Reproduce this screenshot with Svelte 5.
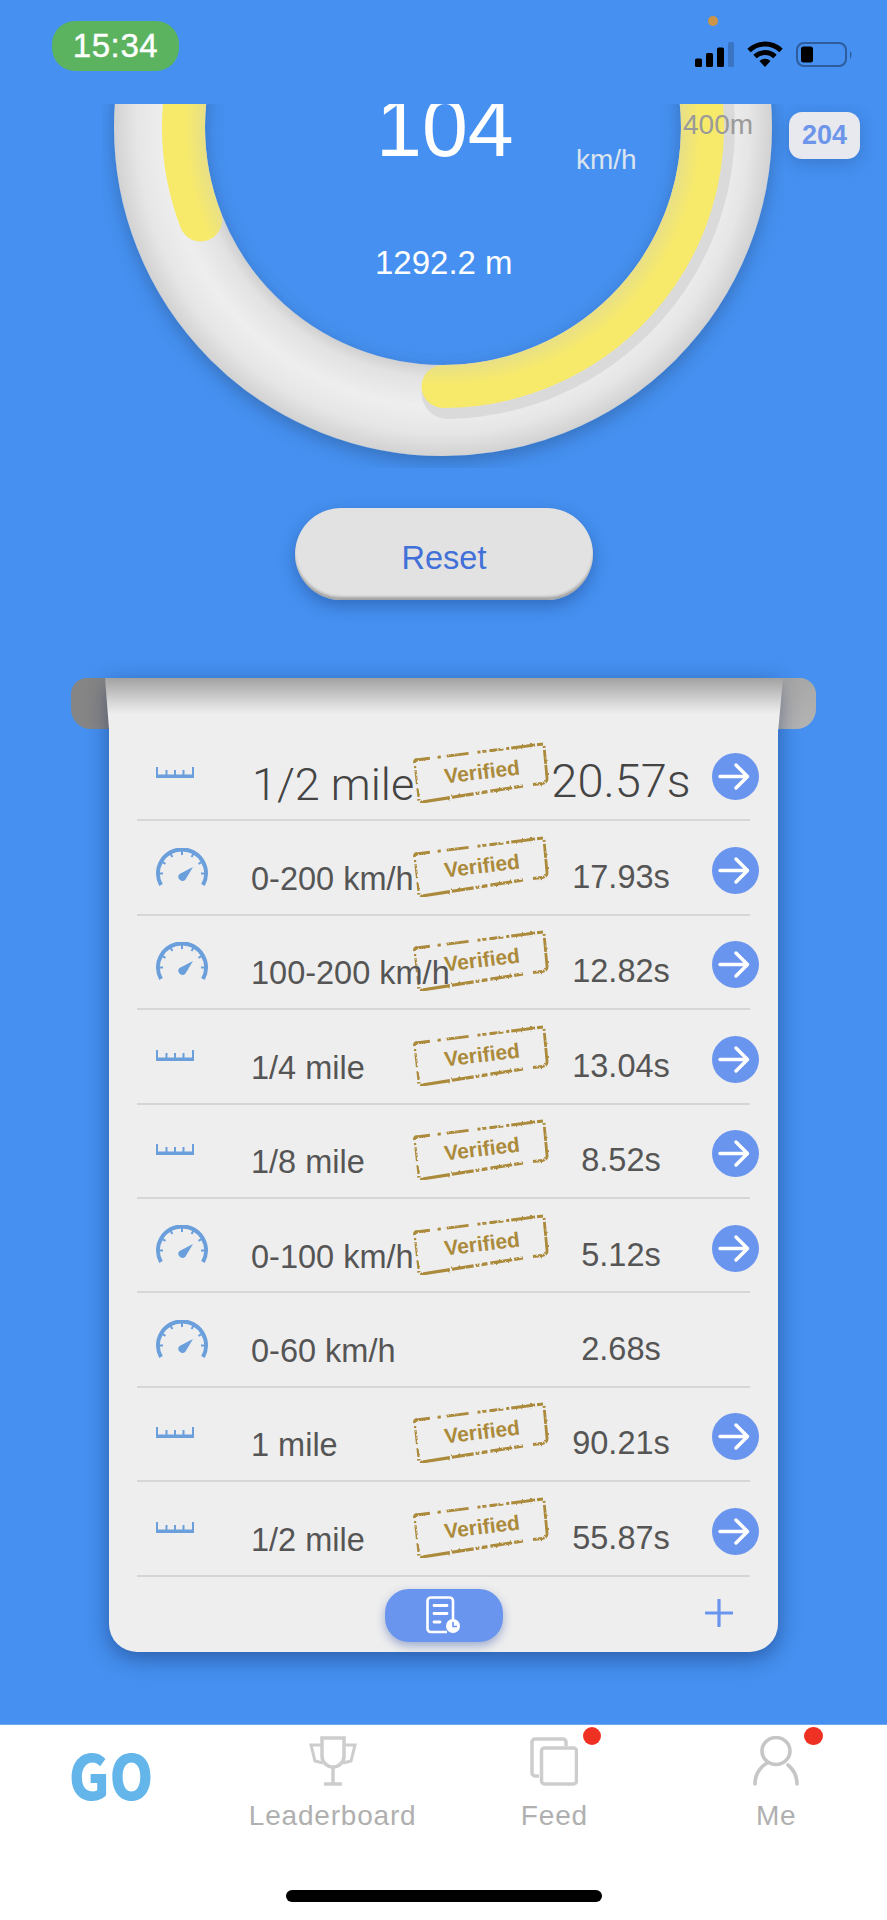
<script lang="ts">
	type Row = { kind: 'ruler' | 'speed'; label: string; time: string; verified: boolean; big?: boolean };

	const rows: Row[] = [
		{ kind: 'ruler', label: '1/2 mile', time: '20.57s', verified: true, big: true },
		{ kind: 'speed', label: '0-200 km/h', time: '17.93s', verified: true },
		{ kind: 'speed', label: '100-200 km/h', time: '12.82s', verified: true },
		{ kind: 'ruler', label: '1/4 mile', time: '13.04s', verified: true },
		{ kind: 'ruler', label: '1/8 mile', time: '8.52s', verified: true },
		{ kind: 'speed', label: '0-100 km/h', time: '5.12s', verified: true },
		{ kind: 'speed', label: '0-60 km/h', time: '2.68s', verified: false },
		{ kind: 'ruler', label: '1 mile', time: '90.21s', verified: true },
		{ kind: 'ruler', label: '1/2 mile', time: '55.87s', verified: true }
	];

	// gauge centre in stage coordinates (stage starts at y=104)
	const cx = 443;
	const cy = 23;

	function pt(r: number, deg: number) {
		const a = (deg * Math.PI) / 180;
		return `${(cx + r * Math.cos(a)).toFixed(1)} ${(cy + r * Math.sin(a)).toFixed(1)}`;
	}
	// clockwise in screen terms, angles in degrees from +x
	function arc(r: number, from: number, to: number) {
		return `M${pt(r, from)} A${r} ${r} 0 ${Math.abs(to - from) > 180 ? 1 : 0} ${to > from ? 1 : 0} ${pt(r, to)}`;
	}
</script>

{#snippet stamp()}
	<svg class="stamp" viewBox="0 0 136 61" width="136" height="61" aria-hidden="true">
		<g fill="none" stroke="#ab8a3b" stroke-width="2.800" stroke-linecap="butt" filter="url(#rough)">
			<path d="M3 18 L130 2" stroke-dasharray="14 8 3 6 22 9 3 2 4 3 8 1 5 3 3 2 24 2" />
			<path d="M1.500 21 Q1 18 4 17.500" />
			<path d="M131 4 L134 36 Q134.500 41 129 41.500 L120 42.500" stroke-dasharray="2 2 14 1 18 1 14 0" />
			<path d="M110 44 L9 60 Q6 60.500 5.800 57" stroke-dasharray="9 2 22 3 6 2 4 2 22 2 30 2" stroke-width="3.200" />
			<path d="M5.500 55 L2 24" stroke-dasharray="9 4 14 2 6 2" stroke-width="2.200" />
		</g>
		<text x="69" y="37" text-anchor="middle" transform="rotate(-7 69 30)">Verified</text>
	</svg>
{/snippet}

{#snippet rulerIcon()}
	<svg class="ruler" viewBox="0 0 38 11" width="38" height="11" aria-hidden="true">
		<path d="M1 0 V8 M10.500 3 V8 M19 3 V8 M27.500 3 V8 M37 0 V8" fill="none" stroke="#6a9fdc" stroke-width="2" />
		<rect x="0" y="7.500" width="38" height="3.500" fill="#6a9fdc" />
	</svg>
{/snippet}

{#snippet speedIcon()}
	<svg class="speedo" viewBox="0 0 52 38" width="52" height="38" aria-hidden="true">
		<path d="M5 37 A24 24 0 1 1 47 37" fill="none" stroke="#6a9fdc" stroke-width="4" />
		<path d="M26 2 V7 M14 5 L16.500 9 M38 5 L35.500 9 M5.200 13.400 L9.500 15.900 M46.800 13.400 L42.500 15.900 M2 25.400 H7 M50 25.400 H45" stroke="#6a9fdc" stroke-width="2" />
		<path d="M37 19 L29.500 31.500 A4 4 0 1 1 23.500 26 Z" fill="#6a9fdc" />
	</svg>
{/snippet}

<div class="page">
	<header class="status">
		<div class="clock">15:34</div>
		<span class="cam-dot"></span>
		<div class="status-icons">
			<svg viewBox="0 0 39 25" width="39" height="25" aria-hidden="true">
				<rect x="0" y="16.500" width="7" height="8.500" rx="1.500" fill="#000" />
				<rect x="11" y="11" width="7" height="14" rx="1.500" fill="#000" />
				<rect x="22" y="5.500" width="7" height="19.500" rx="1.500" fill="#000" />
				<rect x="33" y="0" width="6" height="25" rx="1.500" fill="#3a75c4" />
			</svg>
			<svg class="wifi" viewBox="0 0 36 26" width="36" height="26" aria-hidden="true">
				<g fill="none" stroke="#000" stroke-width="4.800">
					<path d="M2 9.500 A23 23 0 0 1 34 9.500" />
					<path d="M8 15.500 A14.500 14.500 0 0 1 28 15.500" />
				</g>
				<path d="M12.500 20 A8 8 0 0 1 23.500 20 L18 26 Z" fill="#000" />
			</svg>
			<svg viewBox="0 0 57 25" width="57" height="25" aria-hidden="true">
				<rect x="1" y="1" width="49" height="23" rx="7" fill="none" stroke="#2e5c9c" stroke-width="2" />
				<rect x="5" y="4.500" width="12" height="16" rx="2.500" fill="#000" />
				<path d="M54 8.500 Q57 12.500 54 17 Z" fill="#2e5c9c" />
			</svg>
		</div>
	</header>

	<section class="stage">
		<svg class="gauge" viewBox="0 0 887 404" width="887" height="404" aria-hidden="true">
			<defs>
				<radialGradient id="ring" gradientUnits="userSpaceOnUse" cx={cx} cy={cy} r="329">
					<stop offset="0.72" stop-color="#cfcfcf" />
					<stop offset="0.76" stop-color="#e2e2e2" />
					<stop offset="0.85" stop-color="#eeeeee" />
					<stop offset="0.93" stop-color="#e6e6e6" />
					<stop offset="1" stop-color="#d2d2d2" />
				</radialGradient>
				<radialGradient id="lane" gradientUnits="userSpaceOnUse" cx={cx} cy={cy} r="290">
					<stop offset="0.82" stop-color="#e8df86" />
					<stop offset="0.89" stop-color="#f7ea6b" />
					<stop offset="1" stop-color="#f7ea6b" />
				</radialGradient>
				<filter id="soft" x="-10%" y="-10%" width="120%" height="120%">
					<feDropShadow dx="0" dy="6" stdDeviation="9" flood-color="#000" flood-opacity="0.22" />
				</filter>
				<!-- worn ink edge for the Verified stamps -->
				<filter id="rough" x="-5%" y="-10%" width="110%" height="120%">
					<feTurbulence type="fractalNoise" baseFrequency="0.35" numOctaves="2" seed="4" />
					<feDisplacementMap in="SourceGraphic" scale="2.400" />
				</filter>
			</defs>
			<circle cx={cx} cy={cy} r="283.500" fill="none" stroke="url(#ring)" stroke-width="91" filter="url(#soft)" />
			<path d={arc(266, 89, -6)} fill="none" stroke="#dadada" stroke-width="52" stroke-linecap="round" />
			<path d={arc(259.500, 200, 159)} fill="none" stroke="url(#lane)" stroke-width="43" stroke-linecap="round" />
			<path d={arc(259.500, 90, -6)} fill="none" stroke="url(#lane)" stroke-width="43" stroke-linecap="round" />
		</svg>
		<span class="speed">104</span>
		<span class="unit">km/h</span>
		<span class="distance">1292.2 m</span>
		<span class="mark">400m</span>
		<span class="badge">204</span>
	</section>

	<button class="reset">Reset</button>

	<section class="sheet-wrap">
		<div class="roller"></div>
		<div class="sheet">
			<div class="fold"></div>
			<ul class="rows">
				{#each rows as row}
					<li class="row" class:big={row.big}>
						<span class="row-icon">
							{#if row.kind === 'ruler'}
								{@render rulerIcon()}
							{:else}
								{@render speedIcon()}
							{/if}
						</span>
						<span class="label">{row.label}</span>
						<span class="stamp-cell">
							{#if row.verified}
								{@render stamp()}
							{/if}
						</span>
						<span class="time">{row.time}</span>
						<span class="go">
							{#if row.verified}
								<svg viewBox="0 0 47 47" width="47" height="47" aria-hidden="true">
									<circle cx="23.500" cy="23.500" r="23.500" fill="#6a95ef" />
									<path d="M8 23.500 H35 M24 12 L35.500 23.500 L24 35" fill="none" stroke="#fff" stroke-width="3.500" stroke-linecap="round" stroke-linejoin="round" />
								</svg>
							{/if}
						</span>
					</li>
				{/each}
			</ul>
			<div class="sheet-foot">
				<button class="history" aria-label="History">
					<svg viewBox="0 0 36 40" width="36" height="40" aria-hidden="true">
						<path d="M27 25 V6 A3.500 3.500 0 0 0 23.500 2.500 H5 A3.500 3.500 0 0 0 1.500 6 V33 A3.500 3.500 0 0 0 5 37 H21" fill="none" stroke="#fff" stroke-width="2.600" />
						<path d="M8 10.500 H21 M8 18.500 H21 M8 27 H14" stroke="#fff" stroke-width="2.800" stroke-linecap="round" />
						<circle cx="27" cy="31" r="7" fill="#fff" />
						<path d="M27 27 V31.500 H31" fill="none" stroke="#6a95ef" stroke-width="1.600" />
					</svg>
				</button>
				<svg class="plus" viewBox="0 0 28 28" width="28" height="28" aria-hidden="true">
					<path d="M14 1 V27 M1 14 H27" stroke="#6a95ef" stroke-width="3.200" stroke-linecap="round" />
				</svg>
			</div>
		</div>
	</section>

	<nav class="tabs">
		<div class="tab">
			<span class="go-logo">GO</span>
		</div>
		<div class="tab">
			<svg class="tab-icon" viewBox="0 0 48 50" width="48" height="50" aria-hidden="true">
				<g fill="none" stroke="#cdcdcd" stroke-width="3.500">
					<path d="M13 2 H35 V20 A11 11 0 0 1 13 20 Z" />
					<path d="M13 9 H2 L6 25 L14 27 M35 9 H46 L42 25 L34 27" stroke-width="3" />
					<path d="M24 31 V47 M15 48 H33" />
				</g>
			</svg>
			<span>Leaderboard</span>
		</div>
		<div class="tab">
			<svg class="tab-icon" viewBox="0 0 48 50" width="48" height="50" aria-hidden="true">
				<g fill="none" stroke="#cdcdcd" stroke-width="3.500">
					<path d="M9 40 H5 A3 3 0 0 1 2 37 V6 A3 3 0 0 1 5 3 H33 A3 3 0 0 1 36 6 V10" />
					<rect x="11.500" y="12" width="35" height="36" rx="3" />
				</g>
			</svg>
			<span class="dot feed-dot"></span>
			<span>Feed</span>
		</div>
		<div class="tab">
			<svg class="tab-icon" viewBox="0 0 48 50" width="48" height="50" aria-hidden="true">
				<g fill="none" stroke="#c6c6c6" stroke-width="3.600" stroke-linecap="round">
					<ellipse cx="24" cy="15" rx="14" ry="13.500" />
					<path d="M15 27 C7 32 3 39 3 48" />
					<path d="M36 29 C42 34 45 41 45 48" />
				</g>
			</svg>
			<span class="dot me-dot"></span>
			<span>Me</span>
		</div>
		<div class="home-bar"></div>
	</nav>
</div>

<style>
	:global(body) {
		margin: 0;
		background: #4590f0;
	}

	.page {
		width: 887px;
		height: 1920px;
		background: #4590f0;
		font-family: "Liberation Sans", Arial, sans-serif;
		display: flex;
		flex-direction: column;
		overflow: hidden;
	}

	.status {
		height: 104px;
		flex: none;
		position: relative;
		display: flex;
		justify-content: space-between;
		padding: 21px 34px 0 52px;
		box-sizing: border-box;
	}

	.clock {
		width: 127px;
		height: 50px;
		border-radius: 23px;
		background: #5cb35f;
		color: #fff;
		font-size: 33px;
		line-height: 50px;
		letter-spacing: 0.6px;
		text-align: center;
		-webkit-text-stroke: 0.4px #fff;
	}

	.cam-dot {
		position: absolute;
		left: 708px;
		top: 16px;
		width: 10px;
		height: 10px;
		border-radius: 50%;
		background: #cc9548;
	}

	.status-icons {
		display: flex;
		gap: 13px;
		align-items: flex-start;
		padding-top: 21px;
	}

	.wifi {
		margin-top: -1px;
	}

	.stage {
		height: 404px;
		flex: none;
		position: relative;
		overflow: hidden;
	}

	.gauge {
		display: block;
	}

	.stage span {
		position: absolute;
		white-space: nowrap;
	}

	.speed {
		left: 376px;
		top: -17px;
		color: #fff;
		font-size: 82.5px;
		line-height: 80px;
	}

	.unit {
		left: 576px;
		top: 40px;
		color: #dbe4ef;
		font-size: 28px;
		line-height: 32px;
	}

	.distance {
		left: 375px;
		top: 140px;
		color: #fff;
		font-size: 33px;
		line-height: 38px;
	}

	.mark {
		left: 683px;
		top: 5px;
		color: #9a9a9a;
		font-size: 28px;
		line-height: 32px;
	}

	.badge {
		left: 789px;
		top: 8px;
		width: 71px;
		height: 47px;
		border-radius: 13px;
		background: #e7e9ef;
		color: #6d95ea;
		font-size: 27px;
		font-weight: 700;
		line-height: 47px;
		text-align: center;
		box-shadow: 0 4px 16px rgba(30, 60, 120, 0.28);
	}

	.reset {
		flex: none;
		align-self: flex-start;
		margin-left: 295px;
		width: 298px;
		height: 92px;
		border: none;
		border-radius: 46px;
		background: #e2e2e2;
		color: #4170d8;
		font-family: inherit;
		font-size: 32.5px;
		padding: 8px 0 0;
		box-shadow: inset 0 -4px 3px -1px #a0a0a0, 0 6px 16px rgba(20, 50, 110, 0.38);
	}

	.sheet-wrap {
		flex: none;
		position: relative;
		margin-top: 78px;
		padding: 0 109px;
	}

	.roller {
		position: absolute;
		left: 71px;
		right: 71px;
		top: 0;
		height: 51px;
		border-radius: 16px 16px 20px 20px;
		background: linear-gradient(165deg, #858585 20%, #b4b4b4 100%);
	}

	.sheet {
		position: relative;
		height: 974px;
		box-sizing: border-box;
		padding-top: 49px;
		background: #eeeeee;
		border-radius: 0 0 28px 28px;
		box-shadow: 0 6px 22px rgba(10, 30, 80, 0.46);
	}

	.fold {
		position: absolute;
		left: -4px;
		right: -5px;
		top: 0;
		height: 52px;
		background: linear-gradient(#a2a2a2, #d6d6d6 24px, #eeeeee 36px);
		clip-path: polygon(0 0, 100% 0, 99.3% 100%, 0.6% 100%);
	}

	.rows {
		position: relative;
		list-style: none;
		margin: 0 28px;
		padding: 0;
	}

	.row {
		height: 94.4px;
		box-sizing: border-box;
		border-bottom: 2px solid #d6d6d6;
		display: flex;
		align-items: center;
		color: #555;
		font-size: 32.5px;
		white-space: nowrap;
		margin-right: -9px;
		position: relative;
	}

	.row::after {
		content: "";
		position: absolute;
		right: 0;
		bottom: -2px;
		width: 9px;
		height: 2px;
		background: #eeeeee;
	}

	.row-icon {
		width: 113px;
		padding-left: 19px;
		box-sizing: border-box;
		flex: none;
		display: flex;
		margin-top: -2px;
	}

	.label {
		width: 163px;
		flex: none;
		padding-top: 24px;
		padding-left: 1px;
		box-sizing: border-box;
		position: relative;
		z-index: 1;
	}

	.stamp-cell {
		width: 135px;
		height: 61px;
		flex: none;
		margin-top: -2px;
	}

	.stamp {
		display: block;
	}

	.stamp text {
		fill: #ab8a3b;
		font-family: "Liberation Sans", Arial, sans-serif;
		font-size: 21px;
		font-weight: 700;
	}

	.time {
		width: 146px;
		flex: none;
		text-align: center;
		padding-top: 20px;
	}

	.go {
		width: 47px;
		height: 47px;
		flex: none;
		margin-left: 18px;
		margin-top: 6px;
	}

	.row.big {
		color: #444;
		font-family: Roboto, "Liberation Sans", sans-serif;
		font-weight: 300;
	}

	.row.big .label {
		font-size: 45px;
		padding-top: 22px;
		padding-left: 2px;
	}

	.row.big .time {
		font-size: 47px;
		padding-top: 14px;
	}

	.sheet-foot {
		position: relative;
		height: 75px;
	}

	.history {
		position: absolute;
		left: 276px;
		top: 12px;
		width: 118px;
		height: 53px;
		border: none;
		border-radius: 24px;
		padding: 0;
		background: #6a95ef;
		box-shadow: 0 4px 10px rgba(60, 90, 170, 0.45);
		display: flex;
		align-items: center;
		justify-content: center;
	}

	.plus {
		position: absolute;
		left: 596px;
		top: 22px;
	}

	.tabs {
		flex: none;
		margin-top: 71.6px;
		flex-grow: 1;
		position: relative;
		background: #fff;
		border-top: 1px solid #6fa6ee;
		display: grid;
		grid-template-columns: repeat(4, 1fr);
		align-content: start;
		color: #b0b0b0;
		font-size: 28px;
		letter-spacing: 0.8px;
	}

	.tab {
		position: relative;
		height: 112px;
		padding-top: 11px;
		box-sizing: border-box;
		display: flex;
		flex-direction: column;
		align-items: center;
	}

	.tab-icon {
		display: block;
		margin-bottom: 14px;
	}

	.go-logo {
		color: #64b5e9;
		font-family: "Noto Sans CJK SC", "Noto Sans", sans-serif;
		font-weight: 900;
		font-size: 62px;
		line-height: 62px;
		letter-spacing: 0;
		margin-top: 6px;
		transform: scaleX(0.9);
	}

	.dot {
		position: absolute;
		top: 2px;
		width: 18.5px;
		height: 18.5px;
		border-radius: 50%;
		background: #ef3124;
	}

	.feed-dot {
		left: 139px;
	}

	.me-dot {
		left: 139px;
	}

	.home-bar {
		position: absolute;
		left: 286px;
		top: 165px;
		width: 316px;
		height: 12px;
		border-radius: 6px;
		background: #000;
	}
</style>
